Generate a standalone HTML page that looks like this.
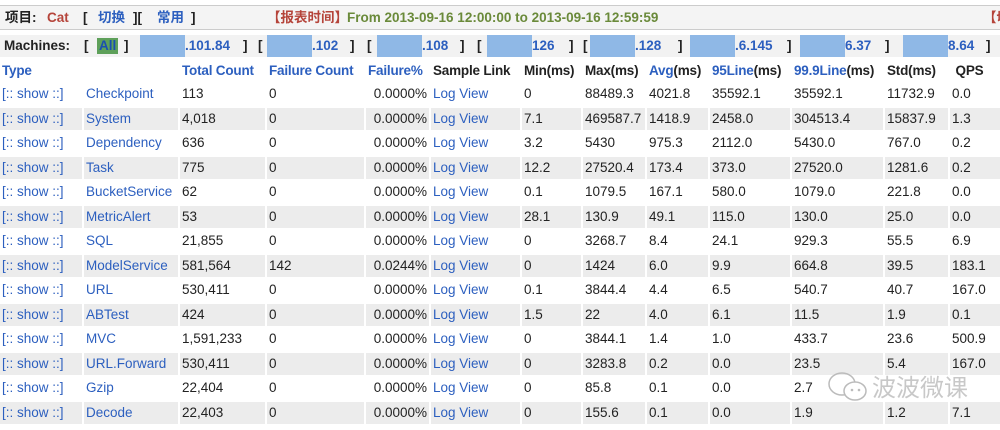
<!DOCTYPE html>
<html><head><meta charset="utf-8"><style>
*{margin:0;padding:0;box-sizing:border-box}
body{width:1000px;height:430px;overflow:hidden;background:#fff;font-family:"Liberation Sans","Noto Sans CJK SC",sans-serif;font-size:13.5px;color:#222;position:relative}
.top{position:absolute;left:-4px;top:5px;width:1010px;height:25px;border:1px solid #ccc;border-radius:4px;background:#f4f4f4;font-weight:bold;font-size:13.5px;line-height:23px}
.top span{position:absolute;top:0}
.r{color:#b5443a}.b{color:#2c5fbf}.g{color:#6a8a3a}
.mach{position:absolute;left:0;top:35px;width:1000px;height:22px;background:#f2f2f2;font-weight:bold;font-size:13.5px;line-height:22px}
.mach span{position:absolute;top:0}
.box{position:absolute;top:0;height:22px;background:#8fb8e6}
table{position:absolute;left:-2px;top:59px;border-collapse:separate;border-spacing:2px 2px;table-layout:fixed;width:1030px}
td{padding:0 2px;white-space:nowrap;overflow:hidden;height:22.5px;line-height:22.5px}
tr.h td{font-weight:bold;height:20px;line-height:20px;letter-spacing:-0.2px}
tr.e td{background:#ececec}
.l{color:#2c5fbf}
.ra{text-align:right}
.wm{position:absolute;color:#bbb;font-size:24px;font-family:"Noto Sans CJK SC",sans-serif;opacity:.8}
</style></head><body>
<div class="top">
<span style="left:8px;color:#222">项目:</span>
<span class="r" style="left:50px">Cat</span>
<span style="left:86px">[</span><span class="b" style="left:101px">切换</span><span style="left:136px">][</span><span class="b" style="left:160px">常用</span><span style="left:194px">]</span>
<span class="r" style="left:270px">【报表时间】</span>
<span class="g" style="left:350px">From 2013-09-16 12:00:00 to 2013-09-16 12:59:59</span>
<span class="r" style="left:986px">【切</span>
</div>
<div class="mach">
<span style="left:4px">Machines:</span><span style="left:84px">[</span>
<span style="left:97px;top:3px;height:16px;line-height:16px;background:#5ea05a;color:#1a4fb0;padding:0 2px">All</span>
<span style="left:124px">]</span>
<div class="box" style="left:140px;width:45px"></div><span class="b" style="left:185px">.101.84</span><span style="left:243px">]</span>
<span style="left:258px">[</span><div class="box" style="left:267px;width:45px"></div><span class="b" style="left:312px">.102</span><span style="left:350px">]</span>
<span style="left:367px">[</span><div class="box" style="left:377px;width:45px"></div><span class="b" style="left:422px">.108</span><span style="left:460px">]</span>
<span style="left:477px">[</span><div class="box" style="left:487px;width:45px"></div><span class="b" style="left:532px">126</span><span style="left:569px">]</span>
<span style="left:583px">[</span><div class="box" style="left:590px;width:45px"></div><span class="b" style="left:635px">.128</span><span style="left:678px">]</span>
<div class="box" style="left:690px;width:45px"></div><span class="b" style="left:735px">.6.145</span><span style="left:787px">]</span>
<div class="box" style="left:800px;width:45px"></div><span class="b" style="left:845px">6.37</span><span style="left:885px">]</span>
<div class="box" style="left:903px;width:45px"></div><span class="b" style="left:948px">8.64</span><span style="left:986px">]</span>
</div>
<table>
<colgroup><col style="width:82px"><col style="width:94px"><col style="width:85px"><col style="width:97px"><col style="width:63px"><col style="width:89px"><col style="width:59px"><col style="width:62px"><col style="width:61px"><col style="width:80px"><col style="width:91px"><col style="width:63px"><col style="width:76px"></colgroup>
<tr class="h"><td class="l" colspan="2">Type</td><td class="l">Total Count</td><td class="l">Failure Count</td><td class="l">Failure%</td><td>Sample Link</td><td>Min(ms)</td><td>Max(ms)</td><td><span class="l">Avg</span>(ms)</td><td><span class="l">95Line</span>(ms)</td><td><span class="l">99.9Line</span>(ms)</td><td>Std(ms)</td><td>&nbsp;QPS</td></tr>
<tr><td class="l">[:: show ::]</td><td class="l">Checkpoint</td><td>113</td><td>0</td><td class="ra">0.0000%</td><td class="l">Log View</td><td>0</td><td>88489.3</td><td>4021.8</td><td>35592.1</td><td>35592.1</td><td>11732.9</td><td>0.0</td></tr>
<tr class="e"><td class="l">[:: show ::]</td><td class="l">System</td><td>4,018</td><td>0</td><td class="ra">0.0000%</td><td class="l">Log View</td><td>7.1</td><td>469587.7</td><td>1418.9</td><td>2458.0</td><td>304513.4</td><td>15837.9</td><td>1.3</td></tr>
<tr><td class="l">[:: show ::]</td><td class="l">Dependency</td><td>636</td><td>0</td><td class="ra">0.0000%</td><td class="l">Log View</td><td>3.2</td><td>5430</td><td>975.3</td><td>2112.0</td><td>5430.0</td><td>767.0</td><td>0.2</td></tr>
<tr class="e"><td class="l">[:: show ::]</td><td class="l">Task</td><td>775</td><td>0</td><td class="ra">0.0000%</td><td class="l">Log View</td><td>12.2</td><td>27520.4</td><td>173.4</td><td>373.0</td><td>27520.0</td><td>1281.6</td><td>0.2</td></tr>
<tr><td class="l">[:: show ::]</td><td class="l">BucketService</td><td>62</td><td>0</td><td class="ra">0.0000%</td><td class="l">Log View</td><td>0.1</td><td>1079.5</td><td>167.1</td><td>580.0</td><td>1079.0</td><td>221.8</td><td>0.0</td></tr>
<tr class="e"><td class="l">[:: show ::]</td><td class="l">MetricAlert</td><td>53</td><td>0</td><td class="ra">0.0000%</td><td class="l">Log View</td><td>28.1</td><td>130.9</td><td>49.1</td><td>115.0</td><td>130.0</td><td>25.0</td><td>0.0</td></tr>
<tr><td class="l">[:: show ::]</td><td class="l">SQL</td><td>21,855</td><td>0</td><td class="ra">0.0000%</td><td class="l">Log View</td><td>0</td><td>3268.7</td><td>8.4</td><td>24.1</td><td>929.3</td><td>55.5</td><td>6.9</td></tr>
<tr class="e"><td class="l">[:: show ::]</td><td class="l">ModelService</td><td>581,564</td><td>142</td><td class="ra">0.0244%</td><td class="l">Log View</td><td>0</td><td>1424</td><td>6.0</td><td>9.9</td><td>664.8</td><td>39.5</td><td>183.1</td></tr>
<tr><td class="l">[:: show ::]</td><td class="l">URL</td><td>530,411</td><td>0</td><td class="ra">0.0000%</td><td class="l">Log View</td><td>0.1</td><td>3844.4</td><td>4.4</td><td>6.5</td><td>540.7</td><td>40.7</td><td>167.0</td></tr>
<tr class="e"><td class="l">[:: show ::]</td><td class="l">ABTest</td><td>424</td><td>0</td><td class="ra">0.0000%</td><td class="l">Log View</td><td>1.5</td><td>22</td><td>4.0</td><td>6.1</td><td>11.5</td><td>1.9</td><td>0.1</td></tr>
<tr><td class="l">[:: show ::]</td><td class="l">MVC</td><td>1,591,233</td><td>0</td><td class="ra">0.0000%</td><td class="l">Log View</td><td>0</td><td>3844.1</td><td>1.4</td><td>1.0</td><td>433.7</td><td>23.6</td><td>500.9</td></tr>
<tr class="e"><td class="l">[:: show ::]</td><td class="l">URL.Forward</td><td>530,411</td><td>0</td><td class="ra">0.0000%</td><td class="l">Log View</td><td>0</td><td>3283.8</td><td>0.2</td><td>0.0</td><td>23.5</td><td>5.4</td><td>167.0</td></tr>
<tr><td class="l">[:: show ::]</td><td class="l">Gzip</td><td>22,404</td><td>0</td><td class="ra">0.0000%</td><td class="l">Log View</td><td>0</td><td>85.8</td><td>0.1</td><td>0.0</td><td>2.7</td><td></td><td></td></tr>
<tr class="e"><td class="l">[:: show ::]</td><td class="l">Decode</td><td>22,403</td><td>0</td><td class="ra">0.0000%</td><td class="l">Log View</td><td>0</td><td>155.6</td><td>0.1</td><td>0.0</td><td>1.9</td><td>1.2</td><td>7.1</td></tr>
</table>
<svg style="position:absolute;left:824px;top:368px" width="50" height="40" viewBox="0 0 50 40"><g fill="none" stroke="#bbb" stroke-width="1.5"><ellipse cx="18" cy="16" rx="13" ry="11"/><ellipse cx="31" cy="23" rx="11" ry="9" fill="#fff"/></g><circle cx="28" cy="22" r="1.3" fill="#bbb"/><circle cx="35" cy="22" r="1.3" fill="#bbb"/></svg>
<div class="wm" style="left:872px;top:368px">波波微课</div>
</body></html>
